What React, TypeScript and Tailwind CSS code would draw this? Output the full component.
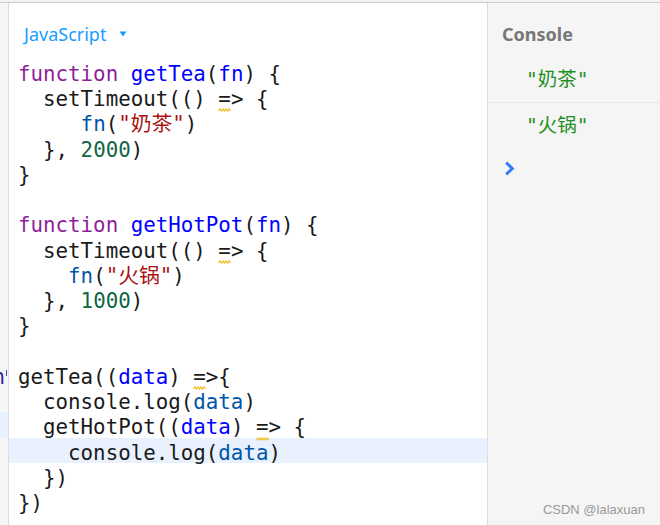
import React from "react";

type Seg = { t: string; c?: string; sq?: boolean };

const K = "#8f1f9c";
const D = "#0000ff";
const V = "#0055aa";
const S = "#aa1111";
const N = "#116644";

const lines: Seg[][] = [
  [{ t: "function", c: K }, { t: " " }, { t: "getTea", c: D }, { t: "(" }, { t: "fn", c: D }, { t: ") {" }],
  [{ t: "  setTimeout(() " }, { t: "=", sq: true }, { t: "> {" }],
  [{ t: "     " }, { t: "fn", c: V }, { t: "(" }, { t: '"奶茶"', c: S }, { t: ")" }],
  [{ t: "  }, " }, { t: "2000", c: N }, { t: ")" }],
  [{ t: "}" }],
  [],
  [{ t: "function", c: K }, { t: " " }, { t: "getHotPot", c: D }, { t: "(" }, { t: "fn", c: D }, { t: ") {" }],
  [{ t: "  setTimeout(() " }, { t: "=", sq: true }, { t: "> {" }],
  [{ t: "    " }, { t: "fn", c: V }, { t: "(" }, { t: '"火锅"', c: S }, { t: ")" }],
  [{ t: "  }, " }, { t: "1000", c: N }, { t: ")" }],
  [{ t: "}" }],
  [],
  [{ t: "getTea((" }, { t: "data", c: D }, { t: ") " }, { t: "=", sq: true }, { t: ">{" }],
  [{ t: "  console.log(" }, { t: "data", c: V }, { t: ")" }],
  [{ t: "  getHotPot((" }, { t: "data", c: D }, { t: ") " }, { t: "=", sq: true }, { t: "> {" }],
  [{ t: "    console.log(" }, { t: "data", c: V }, { t: ")" }],
  [{ t: "  })" }],
  [{ t: "})" }],
];

function Squiggle() {
  return (
    <svg
      className="absolute left-0 bottom-[-3px]"
      width="13"
      height="4"
      viewBox="0 0 13 4"
    >
      <path
        d="M0.5 3 L2 1 L3.5 3 L5 1 L6.5 3 L8 1 L9.5 3 L11 1 L12.5 3"
        fill="none"
        stroke="#f2b705"
        strokeWidth="1.1"
      />
    </svg>
  );
}

export default function App() {
  return (
    <div className="w-[660px] h-[525px] overflow-hidden bg-white flex flex-col">
      <div className="h-[2px] bg-[#f3f3f3] shrink-0" />
      <div className="h-[1px] bg-[#cccccc] shrink-0" />
      <div className="flex flex-1 min-h-0">
        {/* gutter */}
        <div className="w-[9px] shrink-0 bg-[#f6f6f6] border-r border-[#dddddd] flex flex-col pt-[56px] font-['DejaVu_Sans_Mono',monospace] text-[20.8px] leading-[20.24px]">
          {lines.map((_, i) => (
            <div
              key={i}
              className={
                "h-[25.24px] shrink-0 pt-[5px] flex justify-end overflow-hidden whitespace-nowrap " +
                (i === 14 ? "bg-[#e8f1fd]" : "")
              }
            >
              {i === 12 ? (
                <>
                  <span className="text-[#2a2a9a] shrink-0">n</span>
                  <span className="shrink-0 w-[1px] h-[6px] bg-[#5a3aa0] ml-[1px] mr-[1px] mt-[3px]" />
                </>
              ) : null}
            </div>
          ))}
        </div>
        {/* code column */}
        <div className="w-[478px] shrink-0 flex flex-col">
          <div className="h-[56px] shrink-0 pt-[20px] pl-[15px] flex items-start">
            <div className="flex items-center h-[22px]">
              <span className="font-['Noto_Sans',sans-serif] text-[18px] leading-[22px] text-[#189dff]">
                JavaScript
              </span>
              <svg className="ml-[13px]" width="8" height="6" viewBox="0 0 8 6">
                <path d="M0.5 0.5 L7.5 0.5 L4 5.5 Z" fill="#189dff" />
              </svg>
            </div>
          </div>
          <div className="flex flex-col font-['DejaVu_Sans_Mono','Noto_Sans_CJK_SC',monospace] text-[20.8px] leading-[20.24px] text-[#1a1a1a]">
            {lines.map((segs, i) => (
              <div
                key={i}
                className={
                  "h-[25.24px] shrink-0 pt-[5px] pl-[9px] whitespace-pre " +
                  (i === 15 ? "bg-[#e8f1fd]" : "")
                }
              >
                {segs.map((s, j) =>
                  s.sq ? (
                    <span key={j} className="relative inline-block">
                      {s.t}
                      <Squiggle />
                    </span>
                  ) : (
                    <span key={j} style={s.c ? { color: s.c } : undefined}>
                      {s.t}
                    </span>
                  )
                )}
              </div>
            ))}
          </div>
        </div>
        {/* console */}
        <div className="flex-1 bg-[#f5f5f5] border-l border-[#dddddd] flex flex-col relative">
          <div className="h-[54px] shrink-0 pt-[20px] pl-[14px]">
            <div className="font-['Noto_Sans',sans-serif] font-bold text-[18px] leading-[22px] text-[#777777]">
              Console
            </div>
          </div>
          <div className="h-[46px] shrink-0 border-b border-[#e6e6e6] flex items-center pl-[38px] font-['DejaVu_Sans_Mono','Noto_Sans_CJK_SC',monospace] text-[19.5px] text-[#1f8f1f] whitespace-pre">
            "奶茶"
          </div>
          <div className="h-[45px] shrink-0 flex items-center pl-[38px] font-['DejaVu_Sans_Mono','Noto_Sans_CJK_SC',monospace] text-[19.5px] text-[#1f8f1f] whitespace-pre">
            "火锅"
          </div>
          <div className="h-[40px] shrink-0 flex items-center pl-[16px]">
            <svg width="11" height="15" viewBox="0 0 11 15">
              <path
                d="M2.2 1.6 L8.3 7.5 L2.2 13.4"
                fill="none"
                stroke="#2f7df6"
                strokeWidth="3"
                strokeLinejoin="miter"
              />
            </svg>
          </div>
          <div className="absolute right-[15px] bottom-[6px] font-['Liberation_Sans',sans-serif] text-[13px] text-[#9a9a9a]">
            CSDN @lalaxuan
          </div>
        </div>
      </div>
    </div>
  );
}
